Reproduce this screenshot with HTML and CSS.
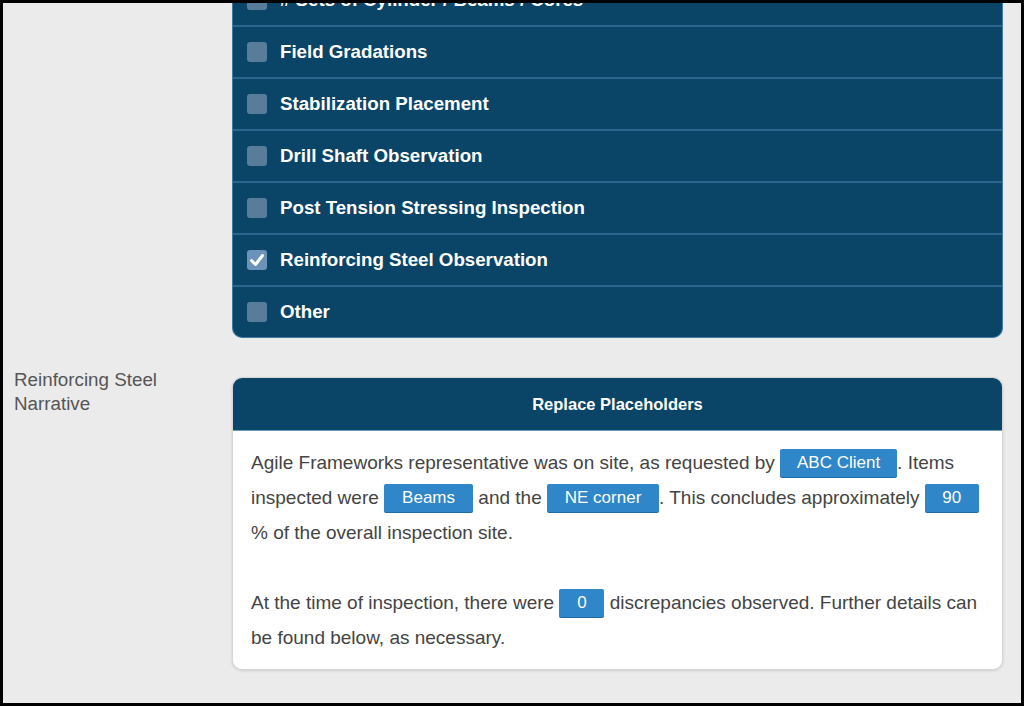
FILE: index.html
```html
<!DOCTYPE html>
<html lang="en">

<head>
    <meta charset="UTF-8">
    <title>Inspection Report</title>
    <link rel="stylesheet" href="styles.css">
</head>

<body>
    <div class="khung">
        <div class="nhan"></div>
        <div class="ds-kiem-tra">
            <div class="dong">
                <span class="o-chon"></span>
                <span># Sets of Cylinder / Beams / Cores</span>
            </div>
            <div class="dong">
                <span class="o-chon"></span>
                <span>Field Gradations</span>
            </div>
            <div class="dong">
                <span class="o-chon"></span>
                <span>Stabilization Placement</span>
            </div>
            <div class="dong">
                <span class="o-chon"></span>
                <span>Drill Shaft Observation</span>
            </div>
            <div class="dong">
                <span class="o-chon"></span>
                <span>Post Tension Stressing Inspection</span>
            </div>
            <div class="dong">
                <span class="o-chon da-chon">
                    <svg viewBox="0 0 20 20" width="20" height="20">
                        <path d="M4.5 10.5 L8.5 14.5 L15.5 5.5" fill="none" stroke="#fff" stroke-width="3" stroke-linecap="round" stroke-linejoin="round"/>
                    </svg>
                </span>
                <span>Reinforcing Steel Observation</span>
            </div>
            <div class="dong">
                <span class="o-chon"></span>
                <span>Other</span>
            </div>
        </div>

        <div class="nhan nhan-tuong-thuat">Reinforcing Steel<br>Narrative</div>
        <div class="the-thay-the">
            <div class="tieu-de">Replace Placeholders</div>
            <div class="noi-dung">
                <p>Agile Frameworks representative was on site, as requested by <span class="cho rong-abc">ABC Client</span>. Items
                inspected were <span class="cho rong-beams">Beams</span> and the <span class="cho rong-ne">NE corner</span>. This concludes approximately <span class="cho rong-90">90</span>
                % of the overall inspection site.</p>
                <p>At the time of inspection, there were <span class="cho rong-0">0</span> discrepancies observed. Further details can
                be found below, as necessary.</p>
            </div>
        </div>
    </div>
</body>

</html>
```

FILE: styles.css
```css
* {
    box-sizing: border-box;
    padding: 0;
    margin: 0;
}

body {
    font-family: "Liberation Sans", Arial, sans-serif;
    background-color: #ebebeb;
}

.khung {
    width: 1024px;
    height: 706px;
    border: 3px solid #000;
    background-color: #ebebeb;
    overflow: hidden;
    display: grid;
    grid-template-columns: 229px 771px;
    align-content: start;
    align-items: start;
    row-gap: 30px;
}

.nhan {
    padding-left: 11px;
    color: #555;
    font-size: 18.8px;
    line-height: 24px;
}

/* danh sach loai kiem tra */
.ds-kiem-tra {
    margin-top: -29px;
    background-color: #0a4467;
    border: 1px solid #3f7aa5;
    border-top: none;
    border-radius: 0 0 10px 10px;
}

.ds-kiem-tra .dong {
    height: 52px;
    display: flex;
    align-items: center;
    gap: 13px;
    padding-left: 14px;
    border-top: 2px solid #2b6590;
    color: #fff;
    font-size: 18.7px;
    font-weight: bold;
}

.ds-kiem-tra .dong:first-child {
    border-top: none;
    height: 51px;
}

.o-chon {
    width: 20px;
    height: 20px;
    border-radius: 3px;
    background-color: #587c9a;
    display: flex;
}

.o-chon.da-chon {
    background-color: #6b93b9;
}

/* the thay the */
.the-thay-the {
    margin-top: 9px;
    background-color: #fff;
    border: 1px solid #d6d6d6;
    border-radius: 10px;
    box-shadow: 0 1px 3px rgba(0, 0, 0, 0.12);
    overflow: hidden;
}

.the-thay-the .tieu-de {
    height: 53px;
    line-height: 53px;
    background-color: #0a4467;
    border-bottom: 1px solid #6a9cc4;
    color: #fff;
    text-align: center;
    font-size: 16.5px;
    font-weight: bold;
}

.the-thay-the .noi-dung {
    padding: 14px 18px 14px 18px;
    color: #444;
    font-size: 19px;
    line-height: 35px;
}

.the-thay-the .noi-dung p + p {
    margin-top: 35px;
}

.cho {
    display: inline-block;
    height: 28px;
    line-height: 28px;
    background-color: #2f86c8;
    color: #fff;
    font-size: 17px;
    text-align: center;
    border-radius: 2px;
    box-shadow: 0 1px 0 #1f6aa3;
    vertical-align: middle;
    position: relative;
    top: -1px;
}

.rong-abc { width: 117px; }
.rong-beams { width: 89px; }
.rong-ne { width: 112px; }
.rong-90 { width: 54px; }
.rong-0 { width: 45px; }
```
